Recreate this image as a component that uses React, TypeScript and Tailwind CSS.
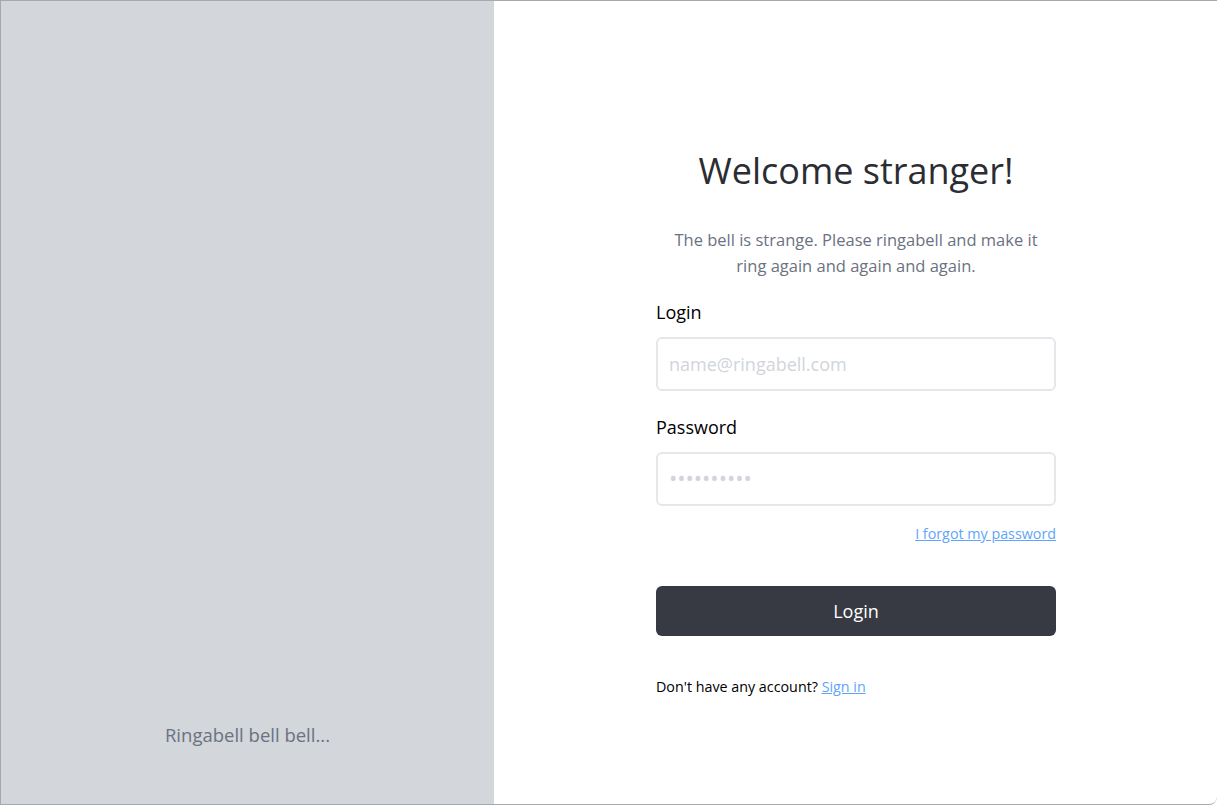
import React, { useState } from "react";

const font = { fontFamily: '"Segoe UI", "Open Sans", "Noto Sans", sans-serif' };

export default function App() {
  const [email, setEmail] = useState("");
  const [password, setPassword] = useState("");

  return (
    <div
      className="flex h-[805px] w-full overflow-hidden border-t border-l border-b border-[#a9a9a9] rounded-br-lg bg-white"
      style={font}
    >
      {/* left side */}
      <div className="flex w-[493px] shrink-0 flex-col justify-end bg-[#d3d6db] pb-[55px]">
        <p className="text-center text-[18.5px] leading-7 text-[#6b7280]">Ringabell bell bell...</p>
      </div>

      {/* right side */}
      <div className="flex flex-1 flex-col items-center pt-[150px] pl-px">
        <div className="w-[400px]">
          <h1 className="text-center text-4xl leading-10 text-[#2b2d33]">Welcome stranger!</h1>
          <p className="mx-auto mt-[36px] max-w-[376px] text-center text-[16.5px] leading-[26px] text-[#6b7280]">
            The bell is strange. Please ringabell and make it ring again and again and again.
          </p>

          <form className="mt-[19px]" onSubmit={(e) => e.preventDefault()}>
            <label className="block text-lg leading-7 text-black">Login</label>
            <input
              type="email"
              placeholder="name@ringabell.com"
              value={email}
              onChange={(e) => setEmail(e.target.value)}
              className="mt-[11px] block h-[54px] w-full rounded-md border-2 border-[#e5e7eb] px-[11px] text-lg text-gray-800 placeholder:text-[#d1d5db] focus:outline-none"
            />

            <label className="mt-[22px] block text-lg leading-7 text-black">Password</label>
            <input
              type="password"
              placeholder="••••••••••"
              value={password}
              onChange={(e) => setPassword(e.target.value)}
              className="mt-[11px] block h-[54px] w-full rounded-md border-2 border-[#e5e7eb] px-[11px] text-lg text-gray-800 placeholder:text-[22px] placeholder:text-[#d1d5db] focus:outline-none"
            />

            <div className="mt-[18px] flex justify-end">
              <a href="#" className="text-[14.3px] leading-5 text-[#60a5fa] underline">
                I forgot my password
              </a>
            </div>

            <button
              type="submit"
              className="mt-[42px] block h-[50px] w-full rounded-md bg-[#373a42] text-lg text-white"
            >
              Login
            </button>
          </form>

          <p className="mt-[41px] text-[14.3px] leading-5 text-black">
            Don't have any account?{" "}
            <a href="#" className="text-[#60a5fa] underline">
              Sign in
            </a>
          </p>
        </div>
      </div>
    </div>
  );
}
